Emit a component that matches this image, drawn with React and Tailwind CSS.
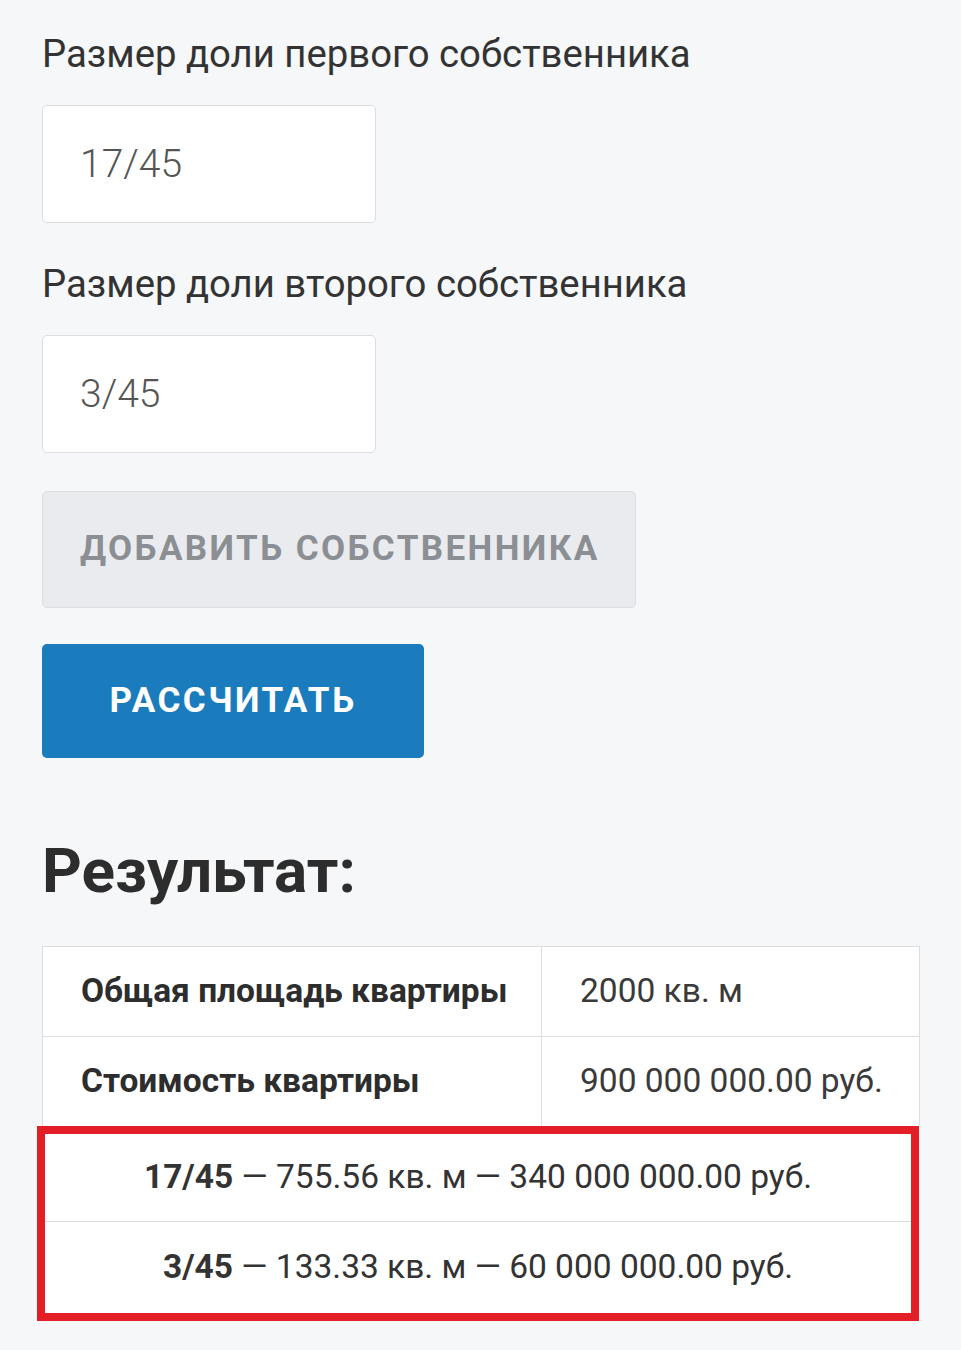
import React from 'react';

const font = { fontFamily: 'Roboto, "Noto Sans", sans-serif' };

const ShareRow = ({ share, area, price, className }) => (
    <div className={`flex items-center justify-center text-[33.5px] text-[#333] ${className}`}>
        <span className="font-bold">{share}</span>
        <span>&nbsp;— {area} кв. м — {price} руб.</span>
    </div>
);

const App = () => {
    return (
        <div className="min-h-[1350px] bg-[#f6f7f9] pl-[42px] pt-[31px] pb-[30px]" style={font}>
            <label className="block text-[38.3px] leading-[46px] text-[#333]">Размер доли первого собственника</label>
            <div className="mt-[28px] flex h-[118px] w-[334px] items-center rounded-[5px] border border-[#dcdde0] bg-white pl-[37px] text-[39px] font-light text-[#555]">
                17/45
            </div>

            <label className="mt-[38px] block text-[38.3px] leading-[46px] text-[#333]">Размер доли второго собственника</label>
            <div className="mt-[28px] flex h-[118px] w-[334px] items-center rounded-[5px] border border-[#dcdde0] bg-white pl-[37px] text-[39px] font-light text-[#555]">
                3/45
            </div>

            <button className="mt-[38px] flex h-[117px] w-[594px] items-center rounded-[5px] border border-[#dcdee2] bg-[#e9ebee] pl-[37px] text-[35px] font-bold uppercase tracking-[2.4px] text-[#8b8e93]">
                Добавить собственника
            </button>

            <button className="mt-[36px] flex h-[114px] w-[382px] items-center justify-center rounded-[5px] bg-[#1a7cbd] text-[35px] font-bold uppercase tracking-[2.5px] text-white">
                Рассчитать
            </button>

            <h2 className="mt-[78px] text-[62px] font-bold leading-[70px] text-[#2d2d2d]">Результат:</h2>

            <div className="mt-[40px] w-[878px]">
                <div className="border-x border-t border-[#dddddd] bg-white">
                    <div className="grid h-[90px] grid-cols-[499px_1fr] border-b border-[#dddddd]">
                        <div className="flex items-center border-r border-[#dddddd] pl-[38px] text-[33.5px] font-bold text-[#2d2d2d]">Общая площадь квартиры</div>
                        <div className="flex items-center pl-[38px] text-[33.5px] text-[#3a3a3a]">2000 кв. м</div>
                    </div>
                    <div className="grid h-[89px] grid-cols-[499px_1fr]">
                        <div className="flex items-center border-r border-[#dddddd] pl-[38px] text-[33.5px] font-bold text-[#2d2d2d]">Стоимость квартиры</div>
                        <div className="flex items-center pl-[38px] text-[33.5px] text-[#3a3a3a]">900 000 000.00 руб.</div>
                    </div>
                </div>
                <div className="-ml-[5px] w-[882px] border-[8px] border-[#e31e26] bg-white">
                    <ShareRow share="17/45" area="755.56" price="340 000 000.00" className="h-[88px] border-b border-[#dddddd]" />
                    <ShareRow share="3/45" area="133.33" price="60 000 000.00" className="h-[91px]" />
                </div>
            </div>
        </div>
    );
};

export default App;
